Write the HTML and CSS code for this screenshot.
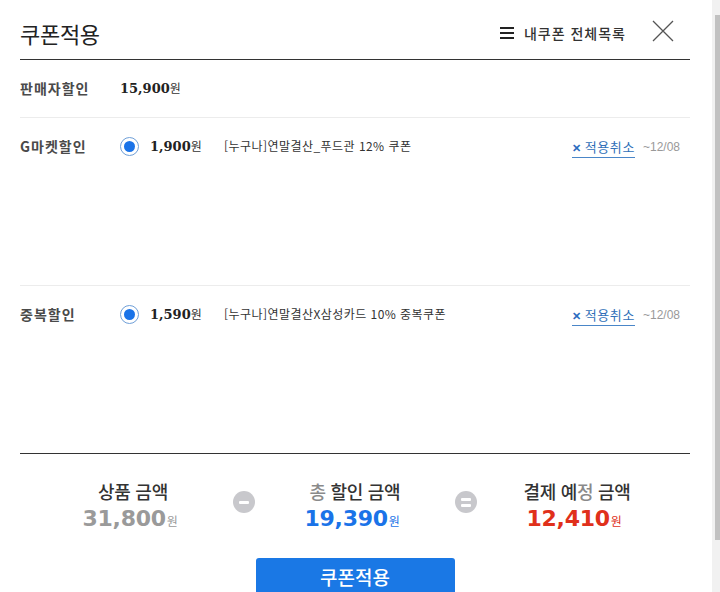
FILE: index.html
```html
<!DOCTYPE html>
<html lang="ko">
<head>
<meta charset="utf-8">
<title>쿠폰적용</title>
<link rel="stylesheet" href="styles.css">
</head>
<body>
<div class="page">
  <header class="head">
    <h1 class="title">쿠폰적용</h1>
    <a class="mylist" href="#"><span class="burger"><i></i><i></i><i></i></span>내쿠폰 전체목록</a>
    <button class="close" type="button" aria-label="닫기">
      <svg width="22" height="22" viewBox="0 0 22 22"><path d="M1 1 L21 21 M21 1 L1 21" stroke="#555" stroke-width="1.3" fill="none"/></svg>
    </button>
  </header>

  <section class="row row-seller">
    <div class="label">판매자할인</div>
    <div class="amount"><b>15,900</b>원</div>
  </section>

  <section class="row row-coupon">
    <div class="label">G마켓할인</div>
    <span class="radio"></span>
    <div class="amount"><b>1,900</b>원</div>
    <div class="cname">[누구나]연말결산_푸드관 12% 쿠폰</div>
    <a class="cancel" href="#"><span class="x">✕</span>적용취소</a>
    <span class="date">~12/08</span>
  </section>

  <section class="row row-coupon last">
    <div class="label">중복할인</div>
    <span class="radio"></span>
    <div class="amount"><b>1,590</b>원</div>
    <div class="cname">[누구나]연말결산X삼성카드 10% 중복쿠폰</div>
    <a class="cancel" href="#"><span class="x">✕</span>적용취소</a>
    <span class="date">~12/08</span>
  </section>

  <div class="summary">
    <div class="sum-item">
      <div class="sum-title">상품 금액</div>
      <div class="sum-value grey">31,800<small>원</small></div>
    </div>
    <div class="op"><span class="op-minus"></span></div>
    <div class="sum-item">
      <div class="sum-title"><span class="faint">총</span> 할인 금액</div>
      <div class="sum-value blue">19,390<small>원</small></div>
    </div>
    <div class="op"><span class="op-eq"></span></div>
    <div class="sum-item">
      <div class="sum-title">결제 예<span class="faint">정</span> 금액</div>
      <div class="sum-value red">12,410<small>원</small></div>
    </div>
  </div>

  <div class="actions">
    <button class="apply" type="button">쿠폰적용</button>
  </div>
</div>
<div class="scrollbar"><div class="thumb"></div></div>
</body>
</html>
```
FILE: styles.css
```css
* { box-sizing: border-box; }
html, body { margin: 0; padding: 0; background: #fff; overflow: hidden; }
body {
  font-family: "Noto Sans CJK KR", "Noto Sans", sans-serif;
  color: #333;
  width: 720px;
  height: 592px;
}
.page {
  width: 670px;
  margin-left: 20px;
}
.head {
  height: 60px;
  border-bottom: 1px solid #333;
  display: flex;
  align-items: center;
  padding-top: 6px;
}
.title {
  margin: 0;
  font-size: 22px;
  font-weight: 400;
  color: #222;
  flex: 1;
  letter-spacing: -0.3px;
}
.mylist {
  display: flex;
  align-items: center;
  font-size: 14px;
  font-weight: 500;
  color: #333;
  text-decoration: none;
  margin-right: 26px;
  letter-spacing: 1px;
}
.burger {
  display: flex;
  flex-direction: column;
  gap: 3px;
  width: 14px;
  margin-right: 10px;
}
.burger i {
  display: block;
  height: 2px;
  background: #222;
}
.close {
  border: 0;
  background: none;
  padding: 0;
  width: 22px;
  height: 22px;
  margin-right: 16px;
  margin-top: -4px;
}
.close svg { display: block; }

.row {
  display: flex;
  align-items: flex-start;
  padding-top: 18px;
  border-bottom: 1px solid #ececec;
  font-size: 13px;
}
.row-seller { height: 58px; }
.row-coupon { height: 168px; }
.row-coupon.last { height: 167px; border-bottom: 0; }
.label {
  width: 100px;
  font-size: 14px;
  line-height: 20px;
  font-weight: 700;
  color: #4a4a4a;
  letter-spacing: 1px;
}
.radio {
  width: 19px;
  height: 19px;
  border-radius: 50%;
  border: 1px solid #6f9fd8;
  margin-top: 1px;
  margin-right: 11px;
  display: flex;
  align-items: center;
  justify-content: center;
}
.radio::after {
  content: "";
  width: 11px;
  height: 11px;
  border-radius: 50%;
  background: #1a73e8;
}
.amount {
  width: 74px;
  line-height: 20px;
  font-size: 12px;
  color: #333;
}
.amount b {
  font-family: "DejaVu Serif", "Liberation Serif", serif;
  font-size: 13px;
  font-weight: 700;
  color: #222;
}
.cname {
  flex: 1;
  font-size: 12px;
  line-height: 20px;
  color: #333;
  letter-spacing: 0.45px;
}
.cancel {
  display: flex;
  align-items: center;
  font-size: 13px;
  line-height: 20px;
  color: #2f6fb8;
  text-decoration: none;
  border-bottom: 1px solid #4a86c8;
  margin-top: 1px;
  letter-spacing: 0.6px;
}
.cancel .x {
  font-size: 11px;
  font-weight: 700;
  margin-right: 3px;
  color: #2a6cc0;
}
.date {
  font-size: 12px;
  line-height: 20px;
  color: #999;
  margin-left: 8px;
  margin-right: 10px;
  font-family: "Liberation Sans", "Noto Sans", sans-serif;
  margin-top: 1px;
}

.summary {
  border-top: 1px solid #333;
  display: flex;
  justify-content: center;
  padding-top: 24px;
}
.sum-item {
  width: 170px;
  text-align: center;
}
.sum-title {
  font-size: 18px;
  font-weight: 500;
  line-height: 26px;
  color: #333;
  letter-spacing: -0.3px;
}
.faint { color: #8a8a8a; }
.sum-value {
  font-family: "DejaVu Sans", "Noto Sans", sans-serif;
  font-size: 22px;
  font-weight: 700;
  line-height: 30px;
  letter-spacing: -0.3px;
  margin-left: -6px;
}
.sum-value small {
  font-family: "Noto Sans CJK KR", sans-serif;
  font-size: 12px;
  font-weight: 400;
  margin-left: 1px;
}
.grey { color: #9a9a9a; }
.blue { color: #1a73e8; }
.red { color: #e0301b; }
.op {
  width: 52px;
  display: flex;
  justify-content: center;
  padding-top: 13px;
}
.op span {
  width: 22px;
  height: 22px;
  border-radius: 50%;
  background: #c8c8cc;
  display: flex;
  flex-direction: column;
  align-items: center;
  justify-content: center;
  gap: 3px;
}
.op-minus::before,
.op-eq::before,
.op-eq::after {
  content: "";
  width: 10px;
  height: 3px;
  border-radius: 1px;
  background: #fff;
}
.actions {
  display: flex;
  justify-content: center;
  padding-top: 22px;
}
.apply {
  width: 199px;
  height: 44px;
  border: 0;
  border-radius: 3px 3px 0 0;
  background: #1a78e5;
  color: #fff;
  font-family: "Noto Sans CJK KR", sans-serif;
  font-size: 19px;
  font-weight: 500;
  padding: 0 0 8px;
}

.scrollbar {
  position: fixed;
  top: 0;
  right: 0;
  width: 8px;
  height: 592px;
  background: #f1f1f1;
}
.thumb {
  position: absolute;
  left: 3px;
  right: 0;
  top: 15px;
  height: 525px;
  background: #c1c1c1;
}
```
